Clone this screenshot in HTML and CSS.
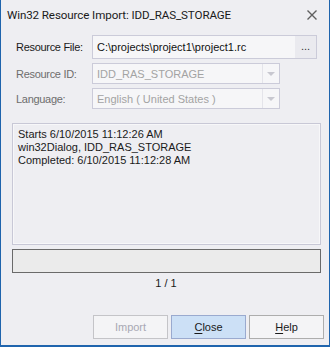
FILE: index.html
```html
<!DOCTYPE html>
<html lang="en">
<head>
  <meta charset="UTF-8" />
  <title>Win32 Resource Import</title>
  <link rel="stylesheet" href="styles.css">
</head>
<body>
  <div class="window">
    <div class="titlebar">
      <span class="title">Win32 Resource Import: IDD_RAS_STORAGE</span>
      <svg class="close-x" width="10" height="10" viewBox="0 0 10 10">
        <path d="M0.5 0.5 L9.5 9.5 M9.5 0.5 L0.5 9.5" stroke="#5f5f5f" stroke-width="1.4" fill="none"/>
      </svg>
    </div>

    <div class="form">
      <label class="label">Resource File:</label>
      <div class="field file">
        <span class="value">C:\projects\project1\project1.rc</span>
        <span class="browse">...</span>
      </div>

      <label class="label dim">Resource ID:</label>
      <div class="field combo">
        <span class="value">IDD_RAS_STORAGE</span>
        <span class="drop"><i class="arrow"></i></span>
      </div>

      <label class="label dim">Language:</label>
      <div class="field combo">
        <span class="value">English ( United States )</span>
        <span class="drop"><i class="arrow"></i></span>
      </div>
    </div>

    <div class="log">
      <div>Starts 6/10/2015 11:12:26 AM</div>
      <div>win32Dialog, IDD_RAS_STORAGE</div>
      <div>Completed: 6/10/2015 11:12:28 AM</div>
    </div>

    <div class="progress"></div>
    <div class="count">1 / 1</div>

    <div class="buttons">
      <button class="btn" disabled>Import</button>
      <button class="btn default"><u>C</u>lose</button>
      <button class="btn"><u>H</u>elp</button>
    </div>
  </div>
</body>
</html>
```

FILE: styles.css
```css
* {
  margin: 0;
  padding: 0;
  box-sizing: border-box;
}

body {
  font-family: "Liberation Sans", Arial, sans-serif;
  font-size: 11px;
  color: #1a1a1a;
  background: #eeeef2;
}

.window {
  width: 330px;
  height: 347px;
  background: #eeeef2;
  border: 1px solid #1f64ad;
  border-top: none;
  border-bottom-width: 2px;
  display: flex;
  flex-direction: column;
}

.titlebar {
  height: 30px;
  display: flex;
  align-items: center;
  justify-content: space-between;
  padding: 0 12px 1px 6px;
}

.title {
  font-family: Roboto, "Liberation Sans", sans-serif;
  font-size: 11.6px;
  letter-spacing: -0.1px;
  color: #1a1a1a;
}

.form {
  display: grid;
  grid-template-columns: 76px auto;
  row-gap: 4px;
  align-items: center;
  padding: 5px 0 0 15px;
}

.label {
  font-size: 11px;
  letter-spacing: -0.3px;
}

.label.dim {
  color: #6d6d6d;
}

.field {
  display: flex;
  border: 1px solid #cbcbd9;
  background: #f6f6f8;
}

.field .value {
  flex: 1;
  padding-left: 4px;
  display: flex;
  align-items: center;
  white-space: nowrap;
}

.file {
  width: 225px;
  height: 24px;
}

.file .value {
  font-size: 11px;
  color: #111;
}

.browse {
  width: 21px;
  background: #eaeaef;
  text-align: center;
  line-height: 20px;
  color: #333;
}

.combo {
  width: 188px;
  height: 21px;
}

.combo + .label {
  margin-top: 1px;
}

.combo .value {
  color: #a3a3a3;
  font-size: 11px;
}

.drop {
  width: 17px;
  border-left: 1px solid #e4e4ea;
  display: flex;
  align-items: center;
  justify-content: center;
}

.arrow {
  width: 0;
  height: 0;
  border-left: 4px solid transparent;
  border-right: 4px solid transparent;
  border-top: 4px solid #c8c8d0;
}

.log {
  margin: 14px 8px 0 11px;
  height: 122px;
  border: 1px solid #c8c8d6;
  box-shadow: inset 0 0 0 1px #f7f7f9;
  padding: 4px 5px;
  font-size: 11px;
  line-height: 13px;
}

.progress {
  margin: 4px 8px 0 11px;
  height: 24px;
  border: 1px solid #6a6a6a;
  background: #ebebeb;
}

.count {
  text-align: center;
  margin-top: 4px;
  font-size: 11px;
  padding-left: 2px;
}

.buttons {
  margin-top: auto;
  margin-bottom: 6px;
  display: flex;
  justify-content: flex-end;
  gap: 3px;
  padding-right: 5px;
}

.btn {
  width: 75px;
  height: 24px;
  font-family: "Liberation Sans", Arial, sans-serif;
  font-size: 11px;
  color: #1a1a1a;
  background: #f4f4f6;
  border: 1px solid #adadad;
}

.btn:disabled {
  color: #a8a8b4;
  border-color: #c4c4c8;
}

.btn.default {
  background: #cce0f6;
  border-color: #9aaacf;
}

.btn u {
  text-decoration: underline;
  text-underline-offset: 2px;
}
```
